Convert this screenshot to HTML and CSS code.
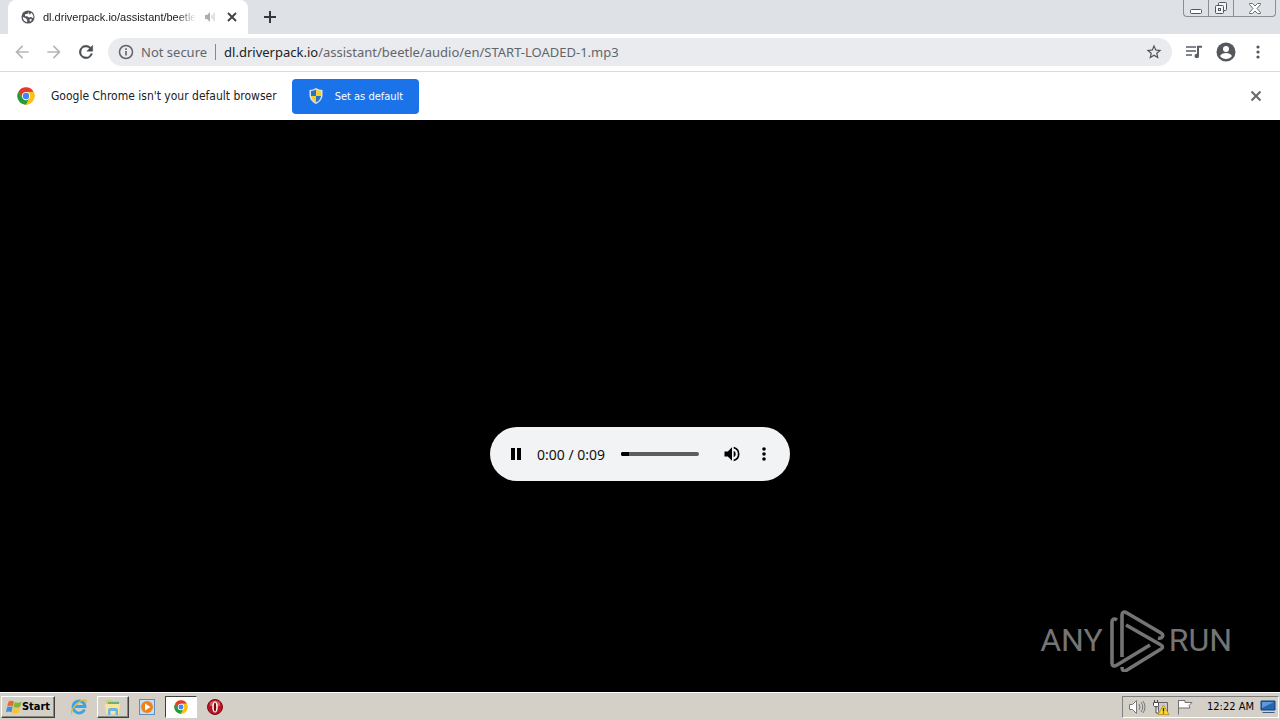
FILE: index.html
```html
<!DOCTYPE html>
<html lang="en">
<head>
    <meta charset="UTF-8">
    <meta name="viewport" content="width=device-width, initial-scale=1.0">
    <title>dl.driverpack.io/assistant/beetle/audio/en/START-LOADED-1.mp3</title>
    <link rel="stylesheet" href="styles.css">
</head>
<body>
    <!-- Shared logo, used in the info bar and the taskbar -->
    <svg class="defs" width="0" height="0" aria-hidden="true">
        <symbol id="chrome" viewBox="0 0 48 48">
            <circle cx="24" cy="24" r="23" fill="#fbc116"/>
            <path d="M4 12.500A23 23 0 0 1 44 12.500L24 13 14.500 29.500z" fill="#e33b2e"/>
            <path d="M4 12.500A23 23 0 0 0 24 47l9.500-17.500H14.500z" fill="#249a41"/>
            <path d="M24 13h20a23 23 0 0 1-20 34l9.500-17.500z" fill="#fbc116"/>
            <circle cx="24" cy="24" r="11" fill="#fff"/>
            <circle cx="24" cy="24" r="8.500" fill="#4285f4"/>
        </symbol>
    </svg>

    <header class="tab-strip">
        <div class="tab">
            <svg class="tab-icon" viewBox="0 0 16 16" width="14" height="14">
                <circle cx="8" cy="8" r="7.500" fill="#53575c"/>
                <path d="M8.500 2l-1 2.500H5L4.500 7H7l2 1.500 2.500-.5 2.500 1.500c.8-3-.7-5.500-2.500-6.500L10.500 5 9 4.500zM2 8l3 1 2 2v3C4 13.500 2 11 2 8zM9.500 11l2-1 1 1-2 2.500z" fill="#fff"/>
            </svg>
            <span class="tab-title">dl.driverpack.io/assistant/beetle</span>
            <svg class="tab-sound" viewBox="0 0 12 12" width="12" height="12">
                <path d="M1 4h2l3-3v10L3 8H1z" fill="#aaadb1"/>
                <path d="M8 4v4M10 2v8" stroke="#c3c6c9" fill="none"/>
            </svg>
            <button class="tab-close" aria-label="Close tab">
                <svg viewBox="0 0 10 10" width="10" height="10"><path d="M1 1l8 8M9 1L1 9" stroke="#3c4043" stroke-width="1.800"/></svg>
            </button>
        </div>
        <button class="new-tab" aria-label="New tab">
            <svg viewBox="0 0 12 12" width="12" height="12"><path d="M6 0v12M0 6h12" stroke="#34373b" stroke-width="2"/></svg>
        </button>
        <div class="window-buttons">
            <button aria-label="Minimize">
                <svg viewBox="0 0 14 14" width="14" height="14"><rect x="1.500" y="8.500" width="11" height="4" rx="1" fill="#fff" stroke="#53565c"/></svg>
            </button>
            <button aria-label="Restore">
                <svg viewBox="0 0 14 14" width="14" height="14" fill="#f4f5f7" stroke="#53565c"><rect x="4.500" y="1.500" width="8" height="8" rx="1"/><rect x="1.500" y="4.500" width="8" height="8" rx="1"/><rect x="4.500" y="7.500" width="2" height="2"/></svg>
            </button>
            <button class="window-close" aria-label="Close">
                <svg viewBox="0 0 14 14" width="14" height="14"><path d="M1.500 2.500h3L7 5l2.500-2.500h3v1L9 7.500l3.500 4v1h-3L7 10l-2.500 2.500h-3v-1L5 7.500l-3.500-4z" fill="#fff" stroke="#6b6e74"/></svg>
            </button>
        </div>
    </header>

    <nav class="toolbar">
        <button aria-label="Back">
            <svg viewBox="0 0 24 24" width="20" height="20"><path d="M20 11H7.800l5.600-5.600L12 4l-8 8 8 8 1.400-1.400L7.800 13H20z" fill="#b4b6b9"/></svg>
        </button>
        <button aria-label="Forward">
            <svg viewBox="0 0 24 24" width="20" height="20"><path d="M12 4l-1.400 1.400 5.600 5.600H4v2h12.200l-5.600 5.600L12 20l8-8z" fill="#b4b6b9"/></svg>
        </button>
        <button aria-label="Reload">
            <svg viewBox="0 0 24 24" width="20" height="20"><path d="M17.650 6.350A8 8 0 1 0 19.730 14h-2.080A6 6 0 1 1 12 6c1.660 0 3.140.69 4.220 1.780L13 11h7V4z" fill="#4b4f54" stroke="#4b4f54" stroke-width=".6"/></svg>
        </button>
        <form class="address-bar">
            <svg class="info" viewBox="0 0 16 16" width="16" height="16"><circle cx="8" cy="8" r="6.500" fill="none" stroke="#5f6368" stroke-width="1.500"/><path d="M8 7v4.500M8 4.300v1.700" stroke="#5f6368" stroke-width="1.600"/></svg>
            <span class="security">Not secure</span>
            <label class="host" for="url">dl.driverpack.io</label>
            <input class="url" id="url" type="text" value="/assistant/beetle/audio/en/START-LOADED-1.mp3">
            <button type="button" aria-label="Bookmark this tab">
                <svg viewBox="0 0 24 24" width="18" height="18"><path d="M22 9.240l-7.190-.62L12 2 9.190 8.630 2 9.240l5.460 4.730L5.820 21 12 17.270 18.180 21l-1.630-7.030zM12 15.400l-3.760 2.270 1-4.280-3.320-2.880 4.380-.38L12 6.100l1.710 4.040 4.380.38-3.320 2.880 1 4.280z" fill="#4f5358"/></svg>
            </button>
        </form>
        <button aria-label="Control your music">
            <svg viewBox="0 0 20 20" width="20" height="20"><path d="M2 5h10M2 9h10M2 13h6" stroke="#5b5f64" stroke-width="1.600"/><path d="M14 14V4.800h4" stroke="#5b5f64" stroke-width="2" fill="none"/><circle cx="12.800" cy="14" r="2.300" fill="#5b5f64"/></svg>
        </button>
        <button aria-label="Profile">
            <svg viewBox="0 0 20 20" width="20" height="20"><circle cx="10" cy="10" r="9.500" fill="#54575c"/><circle cx="10" cy="7" r="3" fill="#fff"/><path d="M4 14c1-2 3.500-3 6-3s5 1 6 3c-1.400 2-3.600 3-6 3s-4.600-1-6-3z" fill="#fff"/></svg>
        </button>
        <button aria-label="Menu">
            <svg viewBox="0 0 20 20" width="20" height="20" fill="#54575c"><circle cx="10" cy="5" r="1.600"/><circle cx="10" cy="10" r="1.600"/><circle cx="10" cy="15" r="1.600"/></svg>
        </button>
    </nav>

    <section class="info-bar">
        <svg class="info-logo" width="18" height="18"><use href="#chrome"/></svg>
        <p>Google Chrome isn't your default browser</p>
        <button class="set-default">
            <svg viewBox="0 0 16 16" width="16" height="16">
                <path d="M8 0c2 1.300 4 1.800 6.500 1.900V7c0 4-2.500 7-6.500 9C4 14 1.500 11 1.500 7V1.900C4 1.800 6 1.300 8 0z" fill="#dce3ea"/>
                <path d="M8 1.500V8H3V3c2-.1 3.500-.6 5-1.500zM8 8h5c-.3 3-2 5-5 6.500z" fill="#2a72c8"/>
                <path d="M8 1.500c1.500.9 3 1.400 5 1.500v5H8zM3 8h5v6.500C5 13 3.300 11 3 8z" fill="#f7cf2c"/>
            </svg>
            Set as default
        </button>
        <button class="dismiss" aria-label="Dismiss">
            <svg viewBox="0 0 12 12" width="12" height="12"><path d="M1.500 1.500l9 9M10.500 1.500l-9 9" stroke="#66696d" stroke-width="2"/></svg>
        </button>
    </section>

    <main class="page">
        <div class="media">
            <div class="player">
                <button aria-label="Pause">
                    <svg viewBox="0 0 20 20" width="20" height="20"><path d="M5 4h4v12H5zM11 4h4v12h-4z"/></svg>
                </button>
                <span class="time">0:00 / 0:09</span>
                <input class="seek" type="range" min="0" max="9" value="0" aria-label="Audio time">
                <button aria-label="Mute">
                    <svg viewBox="0 0 24 24" width="20" height="20"><path d="M3 9v6h4l5 5V4L7 9zm13.500 3A4.500 4.500 0 0 0 14 7.970v8.050A4.500 4.500 0 0 0 16.500 12zM14 3.230v2.060a7 7 0 0 1 0 13.420v2.060a9 9 0 0 0 0-17.540z"/></svg>
                </button>
                <button aria-label="More options">
                    <svg viewBox="0 0 20 20" width="20" height="20"><circle cx="10" cy="5" r="1.800"/><circle cx="10" cy="10" r="1.800"/><circle cx="10" cy="15" r="1.800"/></svg>
                </button>
            </div>
        </div>
        <div class="watermark">
            <span>ANY</span>
            <svg viewBox="0 0 56 64" width="56" height="64" fill="none" stroke="#747474" stroke-width="3.600" stroke-linejoin="round">
                <path d="M8 12C5 10 3 11 3 14v41c0 3 2 4 5 2l33-20"/>
                <path d="M13 49V7c0-3 2-4 5-2l34 20c3 2 2 6-3 5"/>
                <path d="M17 17l35 20c2 1 2 3 0 4L18 62c-3 2-5 1-5-3"/>
            </svg>
            <span>RUN</span>
        </div>
    </main>

    <footer class="taskbar">
        <button class="start">
            <svg viewBox="0 0 16 16" width="16" height="16">
                <path d="M2.500 2.500C4.500 1.300 6 1.400 8 2.500L6.800 7.600C5 6.600 3.200 6.600 1.200 7.600z" fill="#ee6a2c"/>
                <path d="M8.700 3c2 1 4.500 1 6.800-.2l-1.300 5c-2.200 1.200-4.500 1.200-6.700.2z" fill="#7cb83c"/>
                <path d="M1 8.300c2-1 3.800-1 5.600 0l-1.200 5C3.500 12.300 2 12.300 0 13.300z" fill="#3e8fd8"/>
                <path d="M7.300 8.800c2 1 4.500 1 6.700-.2l-1.300 5c-2 1.100-4.500 1.100-6.700.2z" fill="#f6c52f"/>
            </svg>
            Start
        </button>
        <div class="apps">
            <button aria-label="Internet Explorer">
                <svg viewBox="0 0 18 18" width="18" height="18" fill="none">
                    <path d="M14.500 11.500a6 6 0 1 1 .5-3H5" stroke="#3aa5df" stroke-width="2.800"/>
                    <path d="M2 16C-.500 12 9 2 14.500 2c2 0 2 1.500 1.300 3" stroke="#e4b63c" stroke-width="1.300"/>
                </svg>
            </button>
            <button class="raised" aria-label="Windows Explorer">
                <svg viewBox="0 0 18 18" width="18" height="18">
                    <path d="M2 3l1-1h4l1 1h7v12H2z" fill="#e5c763"/>
                    <path d="M4 4h11v2H4z" fill="#64b478"/>
                    <path d="M1 6h15l-1 10H2z" fill="#f7e59b"/>
                    <path d="M4 17v-5q0-2 2-2h6q2 0 2 2v5h-2.500v-4h-5v4z" fill="#6db7df"/>
                </svg>
            </button>
            <button aria-label="Windows Media Player">
                <svg viewBox="0 0 18 18" width="18" height="18">
                    <rect x="1.500" y="1.500" width="15" height="15" fill="#c8def0" stroke="#5d91bd"/>
                    <circle cx="9" cy="9" r="6" fill="#ed841b"/>
                    <path d="M7 5.500v7l5.500-3.500z" fill="#fff"/>
                </svg>
            </button>
            <button class="pressed" aria-label="Google Chrome">
                <svg width="14" height="14"><use href="#chrome"/></svg>
            </button>
            <button aria-label="Opera">
                <svg viewBox="0 0 18 18" width="18" height="18">
                    <circle cx="9" cy="9" r="7.500" fill="#b91420" stroke="#7d0d15"/>
                    <path d="M4 5q5-5 10 0v3H4z" fill="#dd5a60"/>
                    <ellipse cx="9" cy="9" rx="2.800" ry="5.500" fill="#fff"/>
                    <ellipse cx="9" cy="9" rx="1.200" ry="4.500" fill="#6f0a12"/>
                </svg>
            </button>
        </div>
        <div class="tray">
            <svg viewBox="0 0 18 16" width="18" height="16" fill="none" stroke="#77787a">
                <path d="M1.500 5.500h3l4-4v13l-4-4h-3z" fill="#fff"/>
                <path d="M11 5q2 3 0 6M13 3q3.500 5 0 10M15 2q4 6 0 12"/>
            </svg>
            <svg viewBox="0 0 18 16" width="18" height="16">
                <path d="M6.500 3.500h9v10h-9z" fill="#c9cbcc" stroke="#666"/>
                <path d="M2.500 1v2M5.500 1v2M1.500 3.500h5v3l-1 1h-3l-1-1zM4 8v6h3" fill="#fff" stroke="#4b4b4b"/>
                <path d="M11.500 6l5.500 9.500H6z" fill="#ffd928" stroke="#ad8412" stroke-width=".7"/>
                <path d="M11.500 9v3.500M11.500 13.500v1" stroke="#222" stroke-width="1.300"/>
            </svg>
            <svg viewBox="0 0 18 16" width="18" height="16">
                <path d="M2.500 1v14.500M3 1.500h6v2h7l-3 3 1 2.500H9V9H3" fill="#fff" stroke="#707173"/>
            </svg>
            <time>12:22 AM</time>
            <svg viewBox="0 0 16 16" width="16" height="16">
                <path d="M1 2h14v9H1z" fill="#2366b4" stroke="#173e76"/>
                <path d="M2 3h12L2 9z" fill="#5b9bdd"/>
                <path d="M3 13h11l1 1H2z" fill="#3a5d86"/>
            </svg>
        </div>
    </footer>
</body>
</html>
```
FILE: styles.css
```css
* {
    box-sizing: border-box;
}
body {
    display: flex;
    flex-direction: column;
    min-height: 100vh;
    margin: 0;
    font-family: "DejaVu Sans Condensed", "Noto Sans", sans-serif;
    font-size: 12px;
    color: #202124;
    background: #000;
}
.defs {
    position: absolute;
}
button {
    display: flex;
    align-items: center;
    justify-content: center;
    padding: 0;
    border: none;
    background: none;
    font: inherit;
    color: inherit;
}
button svg,
.tray svg {
    flex: none;
}

/* Tab strip */
.tab-strip {
    display: flex;
    align-items: flex-start;
    height: 34px;
    padding-left: 8px;
    background: #dee1e6;
}
.tab {
    display: flex;
    align-items: center;
    width: 240px;
    height: 34px;
    padding: 0 10px 0 13px;
    border-radius: 8px 8px 0 0;
    background: #fff;
}
.tab-icon {
    flex: none;
    margin-right: 8px;
}
.tab-title {
    flex: 1;
    white-space: nowrap;
    font-family: "Liberation Sans", sans-serif;
    font-size: 11px;
    -webkit-mask-image: linear-gradient(to right, #000 88%, transparent);
    mask-image: linear-gradient(to right, #000 88%, transparent);
}
.tab-sound {
    flex: none;
    margin: 0 10px 0 8px;
}
.tab-close {
    width: 12px;
    height: 16px;
}
.new-tab {
    width: 28px;
    height: 34px;
    margin-left: 8px;
}
.window-buttons {
    display: flex;
    height: 17px;
    margin: 0 4px 0 auto;
    border: 1px solid #8b8e96;
    border-top: none;
    border-radius: 0 0 4px 4px;
}
.window-buttons button {
    width: 25px;
    border-right: 1px solid #8b8e96;
}
.window-buttons .window-close {
    width: 41px;
    border-right: none;
}

/* Toolbar */
.toolbar {
    display: flex;
    align-items: center;
    gap: 12px;
    height: 38px;
    padding: 0 12px 2px;
    border-bottom: 1px solid #d9dbde;
    background: #fff;
}
.address-bar {
    display: flex;
    flex: 1;
    align-items: center;
    height: 28px;
    padding: 0 9px 0 10px;
    border-radius: 14px;
    background: #e9ebee;
    font-family: "Noto Sans", sans-serif;
    font-size: 13px;
    color: #62666b;
}
.security {
    margin: 0 8px 0 7px;
    padding-right: 8px;
    border-right: 1px solid #85888c;
    line-height: 16px;
    white-space: nowrap;
}
.host {
    color: #202124;
}
.url {
    flex: 1;
    min-width: 0;
    padding: 0;
    border: none;
    outline: none;
    background: none;
    font: inherit;
    color: inherit;
}

/* Default browser bar */
.info-bar {
    display: flex;
    align-items: center;
    height: 48px;
    padding: 0 18px 0 17px;
    background: #fff;
}
.info-logo {
    margin-right: 16px;
}
.info-bar p {
    margin: 0 15px 0 0;
    white-space: nowrap;
}
.set-default {
    gap: 11px;
    height: 35px;
    padding: 0 16px;
    border-radius: 4px;
    background: #1a73e8;
    font-size: 11px;
    color: #fff;
}
.dismiss {
    margin-left: auto;
}

/* Media page */
.page {
    position: relative;
    display: flex;
    flex: 1;
    align-items: center;
    justify-content: center;
}
.media {
    display: flex;
    align-items: flex-end;
    width: 300px;
    height: 150px;
}
.player {
    display: flex;
    flex: 1;
    align-items: center;
    min-width: 0;
    height: 54px;
    padding: 0 16px;
    border-radius: 27px;
    background: #f1f3f4;
}
.time {
    margin: 0 16px 0 11px;
    font-family: "Noto Sans", sans-serif;
    font-size: 14px;
    color: #111;
    white-space: nowrap;
}
.seek {
    flex: 1;
    min-width: 0;
    height: 4px;
    margin: 0 23px 0 0;
    border-radius: 2px;
    background: linear-gradient(to right, #000 10%, #5c5e5e 10%);
    -webkit-appearance: none;
    appearance: none;
}
.seek::-webkit-slider-thumb {
    -webkit-appearance: none;
    width: 8px;
    height: 4px;
    border-radius: 2px;
    background: #000;
}
.player button + button {
    margin-left: 12px;
}
.watermark {
    position: absolute;
    right: 48px;
    bottom: 20px;
    display: flex;
    align-items: center;
    font-family: Roboto, sans-serif;
    font-size: 32px;
    line-height: 64px;
    color: #747474;
}
.watermark svg {
    margin: 0 4px 0 6px;
}

/* Taskbar */
.taskbar {
    display: flex;
    align-items: center;
    height: 28px;
    padding: 0 1px;
    border-top: 1px solid #fff;
    background: #d4d0c8;
    color: #000;
}
.start,
.raised {
    border: 1px solid;
    border-color: #fff #404040 #404040 #fff;
    box-shadow: inset -1px -1px #8a8780;
}
.start {
    width: 54px;
    height: 22px;
    font-size: 11px;
    font-weight: bold;
}
.apps {
    display: flex;
    margin-left: 8px;
}
.apps button {
    width: 32px;
    height: 22px;
    margin-right: 2px;
}
.apps .pressed {
    border: 1px solid;
    border-color: #404040 #fff #fff #404040;
    background: #fff;
}
.tray {
    display: flex;
    align-items: center;
    gap: 6px;
    height: 22px;
    margin-left: auto;
    padding: 0 2px 0 5px;
    border: 1px solid;
    border-color: #808080 #fff #fff #808080;
    font-size: 11px;
}
.tray time {
    margin-left: 7px;
    white-space: nowrap;
}
```
